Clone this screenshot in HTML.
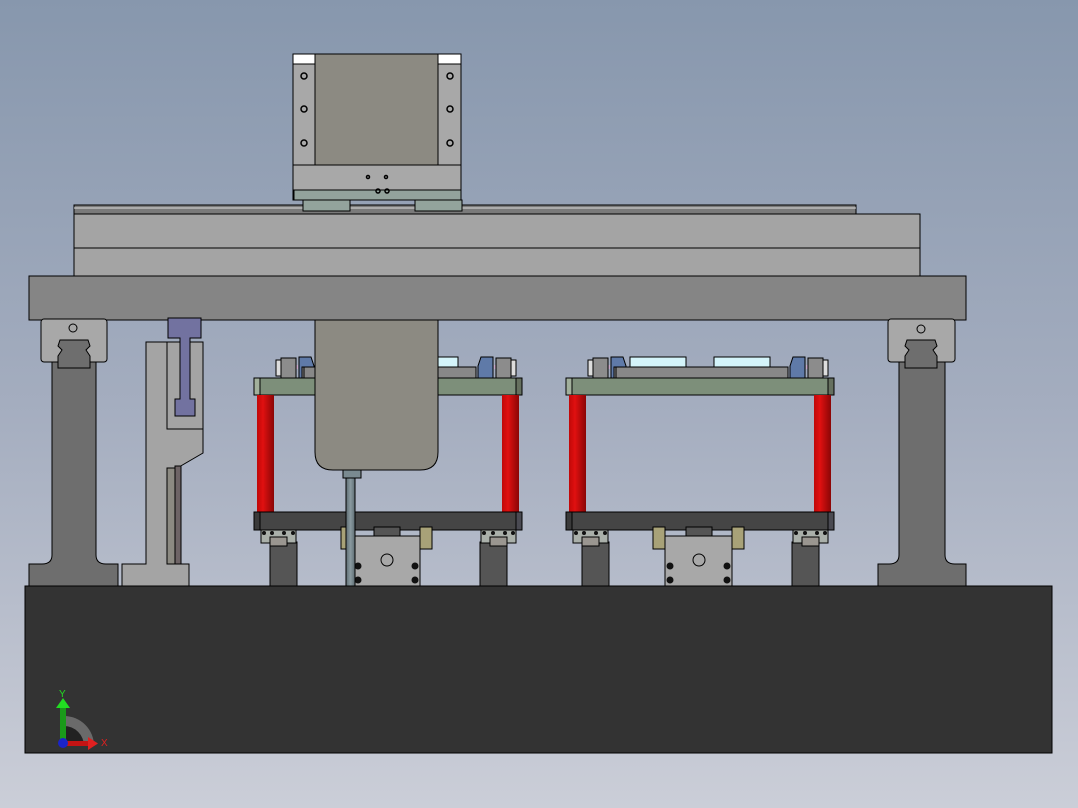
<!DOCTYPE html>
<html><head><meta charset="utf-8"><style>
html,body{margin:0;padding:0;width:1078px;height:808px;overflow:hidden}
svg{display:block}
text{font-family:"Liberation Sans",sans-serif}
</style></head><body>
<svg width="1078" height="808" viewBox="0 0 1078 808" xmlns="http://www.w3.org/2000/svg">
<defs>
<linearGradient id="bg" x1="0" y1="0" x2="0" y2="1">
<stop offset="0" stop-color="#8797ad"/><stop offset="0.5" stop-color="#a4adbf"/><stop offset="1" stop-color="#cbced8"/>
</linearGradient>
<linearGradient id="red" x1="0" y1="0" x2="1" y2="0">
<stop offset="0" stop-color="#c00808"/><stop offset="0.35" stop-color="#e01010"/><stop offset="1" stop-color="#8a0606"/>
</linearGradient>
<linearGradient id="rod" x1="0" y1="0" x2="1" y2="0">
<stop offset="0" stop-color="#5e6c72"/><stop offset="0.5" stop-color="#8a9aa0"/><stop offset="1" stop-color="#5e6c72"/>
</linearGradient>
<g id="fix" stroke="#000" stroke-width="1">
  <!-- top clamps -->
  <rect x="276" y="360" width="6" height="16" fill="#ddd"/>
  <rect x="282" y="365" width="16" height="4" fill="#c8a8c8" stroke="none"/>
  <rect x="281" y="358" width="15" height="20" fill="#8c8c8c"/>
  <path d="M299 378 V357 H311 L314 366 V378 Z" fill="#5f7aa8"/>
  <rect x="302" y="367" width="14" height="11" fill="#8a8a8a"/>
  <rect x="510" y="360" width="6" height="16" fill="#ddd"/>
  <rect x="494" y="365" width="16" height="4" fill="#c8a8c8" stroke="none"/>
  <rect x="496" y="358" width="15" height="20" fill="#8c8c8c"/>
  <path d="M493 378 V357 H481 L478 366 V378 Z" fill="#5f7aa8"/>
  <rect x="318" y="357" width="56" height="10" fill="#d4f4fa"/>
  <rect x="402" y="357" width="56" height="10" fill="#d4f4fa"/>
  <rect x="304" y="367" width="172" height="11" fill="#888"/>
  <!-- top plate -->
  <rect x="254" y="378" width="268" height="17" fill="#7d8f7a"/>
  <rect x="254" y="378" width="6" height="17" fill="#a2b09c"/>
  <rect x="516" y="378" width="6" height="17" fill="#66705f"/>
  <!-- red cylinders -->
  <rect x="257" y="395" width="17" height="117" fill="url(#red)" stroke="none"/>
  <rect x="502" y="395" width="17" height="117" fill="url(#red)" stroke="none"/>
  <!-- bottom plate -->
  <rect x="254" y="512" width="268" height="18" fill="#454545"/>
  <rect x="254" y="512" width="6" height="18" fill="#3a3a3a"/>
  <rect x="516" y="512" width="6" height="18" fill="#4a4a52"/>
  <!-- bearing blocks + posts -->
  <rect x="270" y="542" width="27" height="44" fill="#555"/>
  <rect x="261" y="530" width="35" height="13" fill="#aab0aa"/>
  <rect x="270" y="537" width="17" height="9" fill="#9a9690"/>
  <rect x="480" y="542" width="27" height="44" fill="#555"/>
  <rect x="481" y="530" width="35" height="13" fill="#aab0aa"/>
  <rect x="490" y="537" width="17" height="9" fill="#9a9690"/>
  <g fill="#111" stroke="none">
    <circle cx="264" cy="533" r="2"/><circle cx="272" cy="533" r="2"/><circle cx="284" cy="533" r="2"/><circle cx="293" cy="533" r="2"/>
    <circle cx="484" cy="533" r="2"/><circle cx="493" cy="533" r="2"/><circle cx="505" cy="533" r="2"/><circle cx="513" cy="533" r="2"/>
  </g>
  <!-- motor -->
  <rect x="341" y="527" width="12" height="22" fill="#a8a278"/>
  <rect x="420" y="527" width="12" height="22" fill="#a8a278"/>
  <rect x="374" y="527" width="26" height="9" fill="#555"/>
  <rect x="353" y="536" width="67" height="50" fill="#a8a8a8"/>
  <circle cx="387" cy="560" r="6" fill="none"/>
  <g fill="#111" stroke="none">
    <circle cx="358" cy="566" r="3.5"/><circle cx="358" cy="580" r="3.5"/><circle cx="415" cy="566" r="3.5"/><circle cx="415" cy="580" r="3.5"/>
  </g>
</g>
</defs>
<rect width="1078" height="808" fill="url(#bg)"/>

<g stroke="#000" stroke-width="1">
<!-- base -->
<rect x="25" y="586" width="1027" height="167" fill="#333"/>

<!-- upper rail -->
<rect x="74" y="205" width="782" height="9" fill="#7a7a7a"/>
<line x1="74" y1="208" x2="856" y2="208" stroke="#ddd"/>
<rect x="74" y="214" width="846" height="62" fill="#a4a4a4"/>
<line x1="74" y1="248" x2="920" y2="248"/>
<!-- beam -->
<rect x="29" y="276" width="937" height="44" fill="#858585"/>

<!-- carriage -->
<rect x="293" y="54" width="168" height="146" fill="#a8a8a8"/>
<rect x="315" y="54" width="123" height="111" fill="#8c8a82"/>
<rect x="293" y="54" width="22" height="10" fill="#fff"/>
<rect x="438" y="54" width="23" height="10" fill="#fff"/>
<line x1="293" y1="165" x2="461" y2="165"/>
<rect x="294" y="190" width="167" height="10" fill="#93a39c"/>
<rect x="303" y="200" width="47" height="11" fill="#93a39c"/>
<rect x="415" y="200" width="47" height="11" fill="#93a39c"/>
<g fill="none" stroke-width="1.5">
<circle cx="304" cy="76" r="3"/><circle cx="304" cy="109" r="3"/><circle cx="304" cy="143" r="3"/>
<circle cx="450" cy="76" r="3"/><circle cx="450" cy="109" r="3"/><circle cx="450" cy="143" r="3"/>
<circle cx="368" cy="177" r="1.5"/><circle cx="386" cy="177" r="1.5"/><circle cx="378" cy="191" r="2"/><circle cx="387" cy="191" r="2"/>
</g>

<!-- left pillar -->
<path d="M52 362 H96 V555 Q96 564 106 564 H118 V586 H29 V564 H42 Q52 564 52 555 Z" fill="#6e6e6e"/>
<rect x="41" y="319" width="66" height="43" rx="3" fill="#a8a8a8"/>
<path d="M60 340 H88 L90 346 L86 350 L90 356 V368 H58 V356 L62 350 L58 346 Z" fill="#6e6e6e"/>
<circle cx="73" cy="328" r="4" fill="none"/>
<!-- bracket -->
<path d="M146 342 H203 V453 L167 474 V564 H189 V586 H122 V564 H146 Z" fill="#a4a4a4"/>
<path d="M167 342 V429 H203" fill="none"/>
<rect x="167" y="468" width="8" height="96" fill="#8c8a82"/>
<rect x="175" y="466" width="6" height="98" fill="#6e6466"/>
<path d="M168 318 H201 V338 H190 V399 H195 V416 H175 V399 H180 V338 H168 Z" fill="#7272a0"/>

<!-- right pillar -->
<path d="M899 362 H945 V555 Q945 564 955 564 H966 V586 H878 V564 H889 Q899 564 899 555 Z" fill="#6e6e6e"/>
<rect x="888" y="319" width="67" height="43" rx="3" fill="#a8a8a8"/>
<path d="M907 340 H935 L937 346 L933 350 L937 356 V368 H905 V356 L909 350 L905 346 Z" fill="#6e6e6e"/>
<circle cx="921" cy="329" r="4" fill="none"/>
</g>

<!-- fixtures -->
<use href="#fix"/>
<use href="#fix" transform="translate(312,0)"/>

<g stroke="#000" stroke-width="1">
<!-- central hanging column -->
<path d="M315 320 H438 V452 Q438 470 420 470 H333 Q315 470 315 452 Z" fill="#8c8a82"/>
<rect x="343" y="470" width="18" height="8" fill="#7a8a90"/>
<rect x="346" y="478" width="9" height="108" fill="url(#rod)"/>
</g>

<!-- triad -->
<g>
<path d="M64 746 V716 A30 30 0 0 1 94 746 Z" fill="#6a6a6a"/>
<path d="M64 746 V726 A20 20 0 0 1 84 746 Z" fill="#222"/>
<rect x="60" y="706" width="6" height="38" fill="#1a9a1a"/>
<path d="M56 708 L63 698 L70 708 Z" fill="#22dd22"/>
<rect x="64" y="741" width="26" height="5" fill="#c41414"/>
<path d="M88 737 L98 743.5 L88 750 Z" fill="#e02020"/>
<circle cx="63" cy="743" r="5" fill="#1a24c8"/>
<text x="59" y="697" font-size="10" fill="#22dd22">Y</text>
<text x="101" y="746" font-size="10" fill="#e02020">X</text>
</g>
</svg>
</body></html>
